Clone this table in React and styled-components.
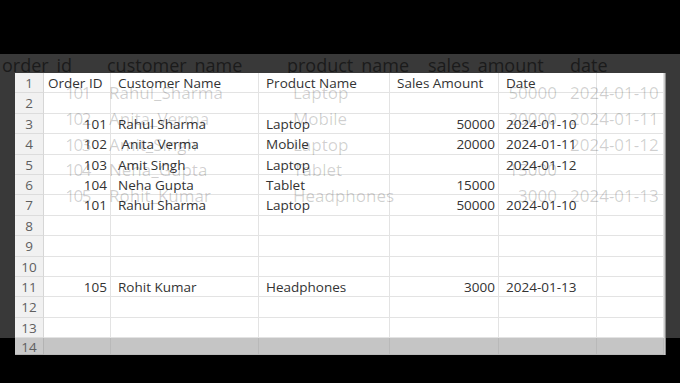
import React from 'react';
import styled, { createGlobalStyle } from 'styled-components';

const GlobalStyle = createGlobalStyle`
  html, body { margin: 0; padding: 0; background: #000; }
  body { font-family: "Open Sans", "Noto Sans", sans-serif; }
`;

const Screen = styled.div`
  width: 680px;
  height: 383px;
  background: #000;
  padding-top: 54px;
  box-sizing: border-box;
  overflow: hidden;
`;

const Band = styled.div`
  height: 284px;
  background: #393939;
  display: flex;
  flex-direction: column;
`;

const GhostHeader = styled.div`
  height: 19px;
  flex-shrink: 0;
  display: grid;
  grid-template-columns: 105px 180px 141px 142px 1fr;
  padding-left: 2px;
  font-size: 18px;
  line-height: 22px;
  color: #1b1b1b;
  white-space: nowrap;
`;

const Sheet = styled.div`
  position: relative;
  z-index: 1;
  height: 282px;
  flex-shrink: 0;
  margin-left: 15px;
  width: 649px;
  background: #fff;
  box-shadow: 1px 0 0 #c9c9c9, 2px 0 0 #8a8a8a;
  display: grid;
  grid-template-columns: 29px 67px 148px 131px 109px 98px 67px;
  grid-template-rows: repeat(13, 20.4px) 17px;
  overflow: hidden;
`;

const Cell = styled.div`
  box-sizing: border-box;
  border-right: 1px solid ${p => (p.$shade ? '#b9b9b9' : '#e3e3e3')};
  border-bottom: 1px solid ${p => (p.$shade ? '#b9b9b9' : '#e3e3e3')};
  background: ${p => (p.$shade ? '#c5c5c5' : '#fff')};
  font-size: 13.5px;
  line-height: 19px;
  color: #333;
  white-space: pre;
  text-align: ${p => p.$align || 'left'};
  padding: ${p => (p.$align === 'right' ? '1px 3px 0 0' : `1px 0 0 ${p.$pad || 7}px`)};
`;

const RowHead = styled(Cell)`
  background: ${p => (p.$shade ? '#c9c9c9' : '#f1f1f1')};
  border-right-color: ${p => (p.$shade ? '#b3b3b3' : '#d6d6d6')};
  border-bottom-color: ${p => (p.$shade ? '#b3b3b3' : '#dcdcdc')};
  color: #5f5f5f;
  text-align: center;
  padding: 1px 0 0;
  line-height: ${p => (p.$shade ? '16px' : '19px')};
`;

const GhostLayer = styled.div`
  position: absolute;
  inset: 0;
  pointer-events: none;
  padding-top: 8px;
  display: grid;
  grid-template-columns: 75px 203px 182px 82px 1fr;
  grid-auto-rows: 25.75px;
  align-content: start;
  font-size: 17px;
  line-height: 24px;
  color: rgba(0, 0, 0, 0.19);
  white-space: nowrap;
`;

const GhostCell = styled.div`
  text-align: ${p => p.$align || 'left'};
  padding-left: ${p => p.$pad || 0}px;
  letter-spacing: ${p => (p.$tight ? '-1.5px' : 'normal')};
`;

const header = ['Order ID', 'Customer Name', 'Product Name', 'Sales Amount', 'Date', ''];

const rows = {
  3: ['101', 'Rahul Sharma', 'Laptop', '50000', '2024-01-10'],
  4: ['102', ' Anita Verma', 'Mobile', '20000', '2024-01-11'],
  5: ['103', 'Amit Singh', 'Laptop', '', '2024-01-12'],
  6: ['104', 'Neha Gupta', 'Tablet', '15000', ''],
  7: ['101', 'Rahul Sharma', 'Laptop', '50000', '2024-01-10'],
  11: ['105', 'Rohit Kumar', 'Headphones', '3000', '2024-01-13'],
};

const ghostRows = [
  ['101', 'Rahul_Sharma', 'Laptop', '50000', '2024-01-10'],
  ['102', 'Anita_Verma', 'Mobile', '20000', '2024-01-11'],
  ['103', 'Amit_Singh', 'Laptop', '', '2024-01-12'],
  ['104', 'Neha_Gupta', 'Tablet', '15000', ''],
  ['105', 'Rohit_Kumar', 'Headphones', '3000', '2024-01-13'],
];

function SheetRow({ n }) {
  const shade = n === 14;
  if (n === 1) {
    return (
      <>
        <RowHead>{n}</RowHead>
        {header.map((h, i) => (
          <Cell key={i} $pad={i === 0 ? 4 : 7}>{h}</Cell>
        ))}
      </>
    );
  }
  const data = rows[n] || ['', '', '', '', ''];
  return (
    <>
      <RowHead $shade={shade}>{n}</RowHead>
      <Cell $shade={shade} $align="right">{data[0]}</Cell>
      <Cell $shade={shade}>{data[1]}</Cell>
      <Cell $shade={shade}>{data[2]}</Cell>
      <Cell $shade={shade} $align="right">{data[3]}</Cell>
      <Cell $shade={shade}>{data[4]}</Cell>
      <Cell $shade={shade} />
    </>
  );
}

export default function App() {
  const nums = Array.from({ length: 14 }, (_, i) => i + 1);
  return (
    <Screen>
      <GlobalStyle />
      <Band>
        <GhostHeader>
          <span>order_id</span>
          <span>customer_name</span>
          <span>product_name</span>
          <span>sales_amount</span>
          <span>date</span>
        </GhostHeader>
        <Sheet>
          {nums.map(n => (
            <SheetRow key={n} n={n} />
          ))}
          <GhostLayer>
            {ghostRows.map((r, i) => (
              <React.Fragment key={i}>
                <GhostCell $align="right" $tight>{r[0]}</GhostCell>
                <GhostCell $pad={19}>{r[1]}</GhostCell>
                <GhostCell>{r[2]}</GhostCell>
                <GhostCell $align="right">{r[3]}</GhostCell>
                <GhostCell $pad={13}>{r[4]}</GhostCell>
              </React.Fragment>
            ))}
          </GhostLayer>
        </Sheet>
      </Band>
    </Screen>
  );
}
